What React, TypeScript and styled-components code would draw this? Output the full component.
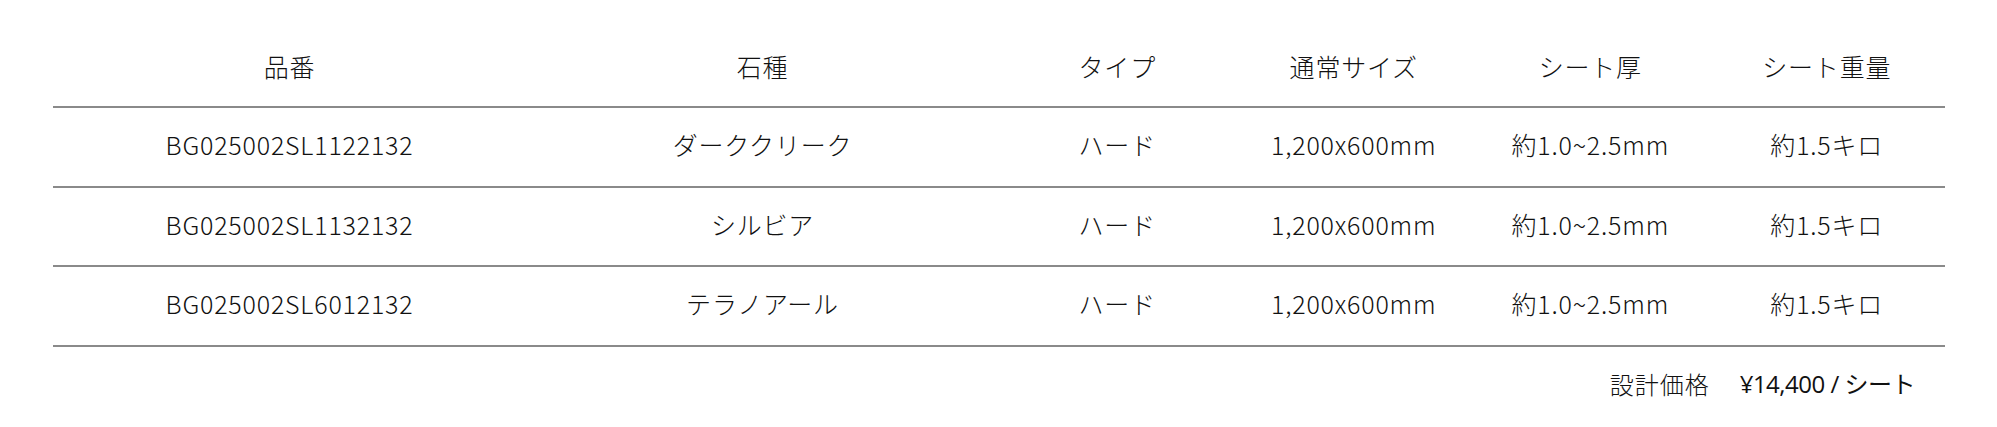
import styled, { createGlobalStyle } from "styled-components";

const GlobalStyle = createGlobalStyle`
    html, body {
        margin: 0;
        padding: 0;
        background: #ffffff;
    }
    body {
        font-family: "Noto Sans CJK JP", "Noto Sans", sans-serif;
        color: #111111;
    }
`;

const Page = styled.div`
    padding: 0 52px 0 53px;
`;

const SpecTable = styled.div`
    display: flex;
    flex-direction: column;
`;

const Row = styled.div<{ $head?: boolean }>`
    display: grid;
    grid-template-columns: 2fr 2fr 1fr 1fr 1fr 1fr;
    padding: ${(p) => (p.$head ? "48px 0 22px" : "18px 0 23.5px")};
    border-bottom: 2px solid #8a8a8a;
`;

const Cell = styled.div`
    text-align: center;
    font-size: 25px;
    line-height: 36px;
    font-weight: 300;
    letter-spacing: 0.8px;
    white-space: nowrap;
`;

const PriceLine = styled.div`
    display: flex;
    justify-content: flex-end;
    align-items: center;
    gap: 30px;
    padding: 19px 30px 0 0;
    font-size: 24px;
    line-height: 36px;
`;

const PriceLabel = styled.span`
    font-family: "Noto Sans CJK JP", sans-serif;
    font-weight: 300;
    letter-spacing: 1px;
`;

const PriceValue = styled.span`
    font-family: "Open Sans", "Noto Sans CJK JP", sans-serif;
    letter-spacing: -0.5px;
`;

type Stone = {
    code: string;
    name: string;
    kind: string;
    size: string;
    thickness: string;
    weight: string;
};

const headers = ["品番", "石種", "タイプ", "通常サイズ", "シート厚", "シート重量"];

const stones: Stone[] = [
    { code: "BG025002SL1122132", name: "ダーククリーク", kind: "ハード", size: "1,200x600mm", thickness: "約1.0~2.5mm", weight: "約1.5キロ" },
    { code: "BG025002SL1132132", name: "シルビア", kind: "ハード", size: "1,200x600mm", thickness: "約1.0~2.5mm", weight: "約1.5キロ" },
    { code: "BG025002SL6012132", name: "テラノアール", kind: "ハード", size: "1,200x600mm", thickness: "約1.0~2.5mm", weight: "約1.5キロ" },
];

export default function App() {
    return (
        <Page>
            <GlobalStyle />
            <SpecTable>
                <Row $head>
                    {headers.map((h) => (
                        <Cell key={h}>{h}</Cell>
                    ))}
                </Row>
                {stones.map((s) => (
                    <Row key={s.code}>
                        <Cell>{s.code}</Cell>
                        <Cell>{s.name}</Cell>
                        <Cell>{s.kind}</Cell>
                        <Cell>{s.size}</Cell>
                        <Cell>{s.thickness}</Cell>
                        <Cell>{s.weight}</Cell>
                    </Row>
                ))}
            </SpecTable>
            <PriceLine>
                <PriceLabel>設計価格</PriceLabel>
                <PriceValue>¥14,400 / シート</PriceValue>
            </PriceLine>
        </Page>
    );
}
